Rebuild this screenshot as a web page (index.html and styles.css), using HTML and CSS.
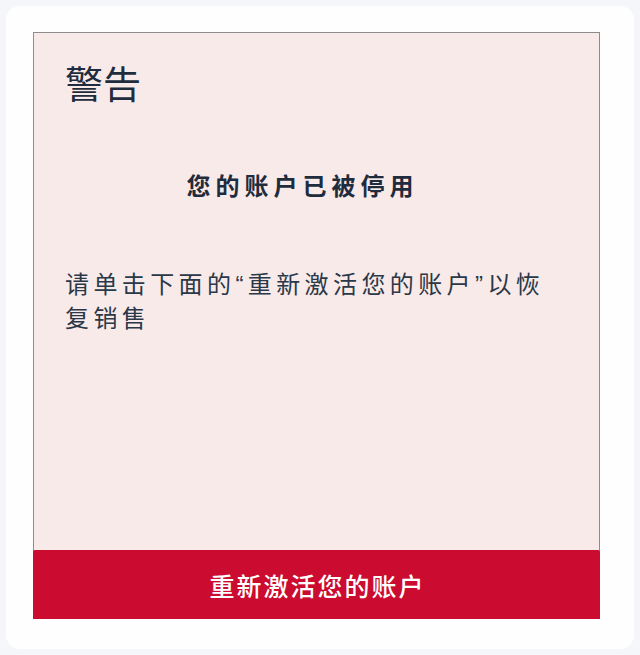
FILE: index.html
```html
<!DOCTYPE html>
<html lang="zh-CN">
<head>
<meta charset="utf-8">
<link rel="stylesheet" href="styles.css">
</head>
<body>
<div class="frame">
  <div class="card">
    <div class="content">
      <h1 class="title">警告</h1>
      <h2 class="subtitle">您的账户已被停用</h2>
      <p class="message">请单击下面的“重新激活您的账户”以恢复销售</p>
    </div>
    <div class="action">重新激活您的账户</div>
  </div>
</div>
</body>
</html>
```
FILE: styles.css
```css
html, body {
  margin: 0;
  padding: 0;
}
body {
  width: 640px;
  height: 655px;
  background: #f5f6f9;
  font-family: "Noto Sans CJK SC", "Noto Sans", sans-serif;
  overflow: hidden;
}
.frame {
  box-sizing: border-box;
  margin: 6px;
  width: 628px;
  height: 643px;
  border-radius: 14px;
  background: #fefefe;
  padding: 26px 0 0 27px;
}
.card {
  box-sizing: border-box;
  width: 567px;
  height: 587px;
  border: 1px solid #8c8c8c;
  border-bottom: none;
  background: #f9eaea;
  display: flex;
  flex-direction: column;
}
.content {
  flex: 1;
  padding: 26px 0 0 31px;
}
.title {
  margin: 0;
  font-size: 38px;
  line-height: 46px;
  font-weight: normal;
  color: #1f2c3d;
}
.subtitle {
  margin: 65px 0 0 -31px;
  padding-right: 28px;
  text-align: center;
  font-size: 24px;
  line-height: 30px;
  font-weight: bold;
  letter-spacing: 5px;
  color: #1f2c3d;
}
.message {
  margin: 68px 0 0 0;
  width: 500px;
  font-family: "Liberation Sans", "Noto Sans CJK SC", sans-serif;
  font-size: 24px;
  line-height: 34px;
  letter-spacing: 4.4px;
  color: #2a3848;
}
.action {
  margin: 0 -1px;
  height: 69px;
  background: #cb0b2f;
  border-radius: 2px 2px 0 0;
  color: #ffffff;
  font-size: 25px;
  font-weight: 500;
  letter-spacing: 2px;
  text-indent: 2px;
  display: flex;
  align-items: center;
  justify-content: center;
}
```
